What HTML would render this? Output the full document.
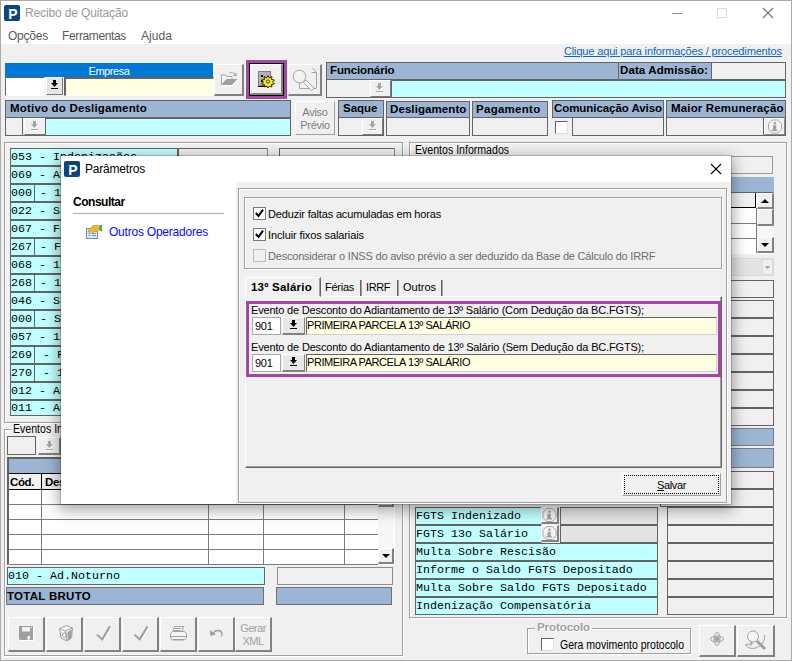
<!DOCTYPE html>
<html><head><meta charset="utf-8"><title>Recibo de Quitação</title>
<style>
*{box-sizing:border-box;margin:0;padding:0}
html,body{width:792px;height:661px;overflow:hidden;background:#f0f0f0;font-family:"Liberation Sans",sans-serif;font-size:11px;color:#000}
.a{position:absolute}
.t{position:absolute;white-space:nowrap;line-height:1}
.hd{position:absolute;background:#9cb5d5;border:1px solid #646464;font-weight:bold;white-space:nowrap;overflow:hidden;line-height:13px;padding:1px 0 0 3px}
.fl{position:absolute;border:1px solid #646464;background:#f0f0f0}
.sk{position:absolute;border:1px solid;border-color:#646464 #fff #fff #646464;background:#f0f0f0}
.rs{position:absolute;border:1px solid;border-color:#fff #7a7a7a #7a7a7a #fff;background:#f0f0f0}
.rs2{position:absolute;border:solid;border-width:1px 2px 2px 1px;border-color:#fff #828282 #828282 #fff;background:#f0f0f0}
.gb{position:absolute;border:1px solid #a0a0a0;box-shadow:1px 1px 0 #fff, inset 1px 1px 0 #fff}
.cy{background:#c0ffff}
.ye{background:#ffffe1}
.wh{background:#fff}
.bl{background:#9cb5d5}
.mono{font-family:"Liberation Mono",monospace;font-size:11.67px;white-space:nowrap;overflow:hidden;line-height:17px;padding-left:0px}
svg{position:absolute;left:0;top:0;overflow:visible}
</style></head><body>
<div class="a wh" style="left:0px;top:0px;width:792px;height:44px;"></div>
<div class="t" style="left:25px;top:7px;font-size:12px;letter-spacing:-0.13px;color:#999">Recibo de Quitação</div>
<div class="t" style="left:8px;top:30px;font-size:12px;letter-spacing:-0.23px;color:#5a5a5a">Opções</div>
<div class="t" style="left:62px;top:30px;font-size:12px;letter-spacing:-0.37px;color:#5a5a5a">Ferramentas</div>
<div class="t" style="left:141px;top:30px;font-size:12px;letter-spacing:0.06px;color:#5a5a5a">Ajuda</div>
<div class="t" style="left:564px;top:46px;font-size:11px;letter-spacing:-0.15px;color:#0a66cc;text-decoration:underline">Clique aqui para informações / procedimentos</div>
<div class="a" style="left:5px;top:63px;width:208px;height:14px;background:#0078d7;color:#fff;text-align:center;line-height:16px;font-size:11px;letter-spacing:-0.43px;">Empresa</div>
<div class="sk wh" style="left:5px;top:77px;width:40px;height:19px;"></div>
<div class="rs" style="left:46px;top:77px;width:17px;height:18px;background:#e4e4e4"></div>
<div class="sk ye" style="left:64px;top:77px;width:150px;height:19px;border-width:2px 1px 1px 2px"></div>
<div class="rs2" style="left:214px;top:64px;width:30px;height:32px;"></div>
<div class="a" style="left:246px;top:60px;width:41px;height:39px;border:3px solid #a446a4"></div>
<div class="a" style="left:249px;top:63px;width:35px;height:33px;border:1px solid #000"></div>
<div class="rs2" style="left:250px;top:64px;width:33px;height:31px;"></div>
<div class="rs2" style="left:288px;top:64px;width:34px;height:32px;"></div>
<div class="hd" style="left:326px;top:62px;width:293px;height:18px;font-size:11.5px;letter-spacing:-0.12px;">Funcionário</div>
<div class="hd" style="left:618px;top:62px;width:94px;height:18px;padding-left:1px;font-size:11.5px;letter-spacing:0.11px;">Data Admissão:</div>
<div class="fl" style="left:711px;top:62px;width:75px;height:18px;"></div>
<div class="fl" style="left:326px;top:79px;width:460px;height:19px;"></div>
<div class="rs" style="left:370px;top:80px;width:21px;height:17px;"></div>
<div class="fl cy" style="left:391px;top:79px;width:395px;height:19px;border-top-width:2px"></div>
<div class="hd" style="left:5px;top:100px;width:286px;height:18px;padding-left:4px;font-size:11.5px;letter-spacing:0.19px;">Motivo do Desligamento</div>
<div class="fl" style="left:5px;top:117px;width:286px;height:19px;"></div>
<div class="fl" style="left:5px;top:117px;width:18px;height:19px;"></div>
<div class="rs" style="left:24px;top:118px;width:22px;height:17px;"></div>
<div class="fl cy" style="left:45px;top:117px;width:246px;height:19px;border-top-width:2px"></div>
<div class="rs" style="left:295px;top:101px;width:40px;height:34px;color:#7c7c7c;text-align:center;font-size:11px;letter-spacing:-0.25px;line-height:13px;padding-top:4px;border-color:#fff #a0a0a0 #a0a0a0 #fff">Aviso<br>Prévio</div>
<div class="hd" style="left:338px;top:100px;width:46px;height:18px;padding-left:4px;font-size:11.5px;letter-spacing:-0.00px;">Saque</div>
<div class="fl" style="left:338px;top:117px;width:46px;height:19px;"></div>
<div class="rs" style="left:362px;top:118px;width:21px;height:17px;"></div>
<div class="hd" style="left:386px;top:101px;width:84px;height:17px;font-size:11.5px;letter-spacing:0.09px;">Desligamento</div>
<div class="fl" style="left:386px;top:117px;width:84px;height:19px;"></div>
<div class="hd" style="left:472px;top:101px;width:76px;height:17px;font-size:11.5px;letter-spacing:0.28px;">Pagamento</div>
<div class="fl" style="left:472px;top:117px;width:76px;height:19px;"></div>
<div class="hd" style="left:552px;top:100px;width:112px;height:18px;padding-left:1px;font-size:11.5px;letter-spacing:-0.06px;">Comunicação Aviso</div>
<div class="sk wh" style="left:555px;top:121px;width:13px;height:13px;border-color:#646464 #e0e0e0 #e0e0e0 #646464"></div>
<div class="fl" style="left:572px;top:117px;width:92px;height:19px;"></div>
<div class="hd" style="left:666px;top:100px;width:120px;height:18px;padding-left:4px;font-size:11.5px;letter-spacing:0.16px;">Maior Remuneração</div>
<div class="fl" style="left:666px;top:117px;width:120px;height:19px;"></div>
<div class="rs" style="left:764px;top:118px;width:21px;height:17px;border-color:#fff #8a8a8a #8a8a8a #fff"></div>
<div class="a" style="left:763px;top:118px;width:1px;height:17px;background:#646464"></div>
<div class="gb" style="left:4px;top:142px;width:399px;height:281px;"></div>
<div class="fl cy mono" style="left:10px;top:148px;width:168px;height:18px;">053 - Indenizações</div>
<div class="fl" style="left:178px;top:148px;width:90px;height:17px;border-color:#646464 #8c8c8c #c8c8c8 #646464"></div>
<div class="fl" style="left:279px;top:148px;width:116px;height:17px;border-color:#646464 #8c8c8c #c8c8c8 #646464"></div>
<div class="fl cy mono" style="left:10px;top:166px;width:168px;height:18px;">069 - Aviso Prévio</div>
<div class="fl" style="left:178px;top:166px;width:90px;height:17px;border-color:#646464 #8c8c8c #c8c8c8 #646464"></div>
<div class="fl" style="left:279px;top:166px;width:116px;height:17px;border-color:#646464 #8c8c8c #c8c8c8 #646464"></div>
<div class="fl cy mono" style="left:10px;top:184px;width:25px;height:18px;">000</div>
<div class="fl cy mono" style="left:34px;top:184px;width:144px;height:18px;padding-left:5px">- 13o</div>
<div class="fl" style="left:178px;top:184px;width:90px;height:17px;border-color:#646464 #8c8c8c #c8c8c8 #646464"></div>
<div class="fl" style="left:279px;top:184px;width:116px;height:17px;border-color:#646464 #8c8c8c #c8c8c8 #646464"></div>
<div class="fl cy mono" style="left:10px;top:202px;width:168px;height:18px;">022 - Sal.Fam</div>
<div class="fl" style="left:178px;top:202px;width:90px;height:17px;border-color:#646464 #8c8c8c #c8c8c8 #646464"></div>
<div class="fl" style="left:279px;top:202px;width:116px;height:17px;border-color:#646464 #8c8c8c #c8c8c8 #646464"></div>
<div class="fl cy mono" style="left:10px;top:220px;width:168px;height:18px;">067 - Férias</div>
<div class="fl" style="left:178px;top:220px;width:90px;height:17px;border-color:#646464 #8c8c8c #c8c8c8 #646464"></div>
<div class="fl" style="left:279px;top:220px;width:116px;height:17px;border-color:#646464 #8c8c8c #c8c8c8 #646464"></div>
<div class="fl cy mono" style="left:10px;top:238px;width:25px;height:18px;">267</div>
<div class="fl cy mono" style="left:34px;top:238px;width:144px;height:18px;padding-left:5px">- Fér</div>
<div class="fl" style="left:178px;top:238px;width:90px;height:17px;border-color:#646464 #8c8c8c #c8c8c8 #646464"></div>
<div class="fl" style="left:279px;top:238px;width:116px;height:17px;border-color:#646464 #8c8c8c #c8c8c8 #646464"></div>
<div class="fl cy mono" style="left:10px;top:256px;width:168px;height:18px;">068 - 1/3</div>
<div class="fl" style="left:178px;top:256px;width:90px;height:17px;border-color:#646464 #8c8c8c #c8c8c8 #646464"></div>
<div class="fl" style="left:279px;top:256px;width:116px;height:17px;border-color:#646464 #8c8c8c #c8c8c8 #646464"></div>
<div class="fl cy mono" style="left:10px;top:274px;width:25px;height:18px;">268</div>
<div class="fl cy mono" style="left:34px;top:274px;width:144px;height:18px;padding-left:5px">- 1/3</div>
<div class="fl" style="left:178px;top:274px;width:90px;height:17px;border-color:#646464 #8c8c8c #c8c8c8 #646464"></div>
<div class="fl" style="left:279px;top:274px;width:116px;height:17px;border-color:#646464 #8c8c8c #c8c8c8 #646464"></div>
<div class="fl cy mono" style="left:10px;top:292px;width:168px;height:18px;">046 - Sal</div>
<div class="fl" style="left:178px;top:292px;width:90px;height:17px;border-color:#646464 #8c8c8c #c8c8c8 #646464"></div>
<div class="fl" style="left:279px;top:292px;width:116px;height:17px;border-color:#646464 #8c8c8c #c8c8c8 #646464"></div>
<div class="fl cy mono" style="left:10px;top:310px;width:25px;height:18px;">000</div>
<div class="fl cy mono" style="left:34px;top:310px;width:144px;height:18px;padding-left:5px">- Sal</div>
<div class="fl" style="left:178px;top:310px;width:90px;height:17px;border-color:#646464 #8c8c8c #c8c8c8 #646464"></div>
<div class="fl" style="left:279px;top:310px;width:116px;height:17px;border-color:#646464 #8c8c8c #c8c8c8 #646464"></div>
<div class="fl cy mono" style="left:10px;top:328px;width:168px;height:18px;">057 - 13o</div>
<div class="fl" style="left:178px;top:328px;width:90px;height:17px;border-color:#646464 #8c8c8c #c8c8c8 #646464"></div>
<div class="fl" style="left:279px;top:328px;width:116px;height:17px;border-color:#646464 #8c8c8c #c8c8c8 #646464"></div>
<div class="fl cy mono" style="left:10px;top:346px;width:25px;height:18px;">269</div>
<div class="fl cy mono" style="left:34px;top:346px;width:144px;height:18px;padding-left:8px">- Fér</div>
<div class="fl" style="left:178px;top:346px;width:90px;height:17px;border-color:#646464 #8c8c8c #c8c8c8 #646464"></div>
<div class="fl" style="left:279px;top:346px;width:116px;height:17px;border-color:#646464 #8c8c8c #c8c8c8 #646464"></div>
<div class="fl cy mono" style="left:10px;top:364px;width:25px;height:18px;">270</div>
<div class="fl cy mono" style="left:34px;top:364px;width:144px;height:18px;padding-left:8px">- 1/3</div>
<div class="fl" style="left:178px;top:364px;width:90px;height:17px;border-color:#646464 #8c8c8c #c8c8c8 #646464"></div>
<div class="fl" style="left:279px;top:364px;width:116px;height:17px;border-color:#646464 #8c8c8c #c8c8c8 #646464"></div>
<div class="fl cy mono" style="left:10px;top:382px;width:168px;height:18px;">012 - Adic</div>
<div class="fl" style="left:178px;top:382px;width:90px;height:17px;border-color:#646464 #8c8c8c #c8c8c8 #646464"></div>
<div class="fl" style="left:279px;top:382px;width:116px;height:17px;border-color:#646464 #8c8c8c #c8c8c8 #646464"></div>
<div class="fl cy mono" style="left:10px;top:400px;width:168px;height:16px;line-height:15px">011 - Adic</div>
<div class="fl" style="left:178px;top:400px;width:90px;height:17px;border-color:#646464 #8c8c8c #c8c8c8 #646464"></div>
<div class="fl" style="left:279px;top:400px;width:116px;height:17px;border-color:#646464 #8c8c8c #c8c8c8 #646464"></div>
<div class="gb" style="left:4px;top:429px;width:399px;height:227px;"></div>
<div class="a" style="left:11px;top:429px;width:100px;height:2px;background:#f0f0f0"></div>
<div class="t" style="left:13px;top:423px;font-size:12.5px;transform-origin:0 0;transform:scaleX(0.846);">Eventos Informados</div>
<div class="fl" style="left:7px;top:436px;width:29px;height:19px;"></div>
<div class="rs2" style="left:38px;top:437px;width:23px;height:18px;"></div>
<div class="sk wh" style="left:7px;top:457px;width:388px;height:108px;border-width:2px 1px 1px 2px"></div>
<div class="a bl" style="left:9px;top:459px;width:369px;height:14px;"></div>
<div class="a" style="left:9px;top:473px;width:369px;height:1px;background:#000"></div>
<div class="a" style="left:9px;top:474px;width:32px;height:15px;background:#f0f0f0;font-weight:bold;padding-left:1px;line-height:16px;font-size:11.5px;letter-spacing:-0.39px;">Cód.</div>
<div class="a" style="left:42px;top:474px;width:336px;height:15px;background:#f0f0f0;font-weight:bold;padding-left:3px;line-height:16px;font-size:11.5px;letter-spacing:-0.33px;">Descrição</div>
<div class="a" style="left:9px;top:489px;width:369px;height:1px;background:#000"></div>
<div class="a" style="left:9px;top:504px;width:369px;height:1px;background:#7c7c7c"></div>
<div class="a" style="left:9px;top:519px;width:369px;height:1px;background:#7c7c7c"></div>
<div class="a" style="left:9px;top:534px;width:369px;height:1px;background:#7c7c7c"></div>
<div class="a" style="left:9px;top:549px;width:369px;height:1px;background:#7c7c7c"></div>
<div class="a" style="left:9px;top:564px;width:369px;height:1px;background:#7c7c7c"></div>
<div class="a" style="left:41px;top:474px;width:1px;height:90px;background:#000"></div>
<div class="a" style="left:208px;top:474px;width:1px;height:90px;background:#7c7c7c"></div>
<div class="a" style="left:263px;top:474px;width:1px;height:90px;background:#7c7c7c"></div>
<div class="a" style="left:344px;top:474px;width:1px;height:90px;background:#7c7c7c"></div>
<div class="a" style="left:41px;top:474px;width:1px;height:16px;background:#000"></div>
<div class="a" style="left:41px;top:490px;width:1px;height:74px;background:#7c7c7c"></div>
<div class="a" style="left:378px;top:459px;width:16px;height:105px;background:#f7f7f7"></div>
<div class="rs2" style="left:378px;top:491px;width:16px;height:16px;"></div>
<div class="rs2" style="left:378px;top:548px;width:16px;height:16px;"></div>
<div class="fl cy mono" style="left:7px;top:567px;width:258px;height:18px;border-color:#646464">010 - Ad.Noturno</div>
<div class="fl" style="left:277px;top:567px;width:116px;height:18px;border-color:#8c8c8c"></div>
<div class="fl bl" style="left:6px;top:587px;width:258px;height:18px;font-weight:bold;line-height:16px;padding-left:0px;border-color:#707070;font-size:11.5px;letter-spacing:0.28px;">TOTAL BRUTO</div>
<div class="fl bl" style="left:276px;top:587px;width:116px;height:18px;border-color:#707070"></div>
<div class="rs2" style="left:8px;top:617px;width:37px;height:35px;color:#a0a0a0;text-align:center;font-size:11px;letter-spacing:-0.5px;line-height:13px;padding-top:4px"></div>
<div class="rs2" style="left:46px;top:617px;width:37px;height:35px;color:#a0a0a0;text-align:center;font-size:11px;letter-spacing:-0.5px;line-height:13px;padding-top:4px"></div>
<div class="rs2" style="left:84px;top:617px;width:37px;height:35px;color:#a0a0a0;text-align:center;font-size:11px;letter-spacing:-0.5px;line-height:13px;padding-top:4px"></div>
<div class="rs2" style="left:122px;top:617px;width:37px;height:35px;color:#a0a0a0;text-align:center;font-size:11px;letter-spacing:-0.5px;line-height:13px;padding-top:4px"></div>
<div class="rs2" style="left:160px;top:617px;width:37px;height:35px;color:#a0a0a0;text-align:center;font-size:11px;letter-spacing:-0.5px;line-height:13px;padding-top:4px"></div>
<div class="rs2" style="left:198px;top:617px;width:37px;height:35px;color:#a0a0a0;text-align:center;font-size:11px;letter-spacing:-0.5px;line-height:13px;padding-top:4px"></div>
<div class="rs2" style="left:235px;top:617px;width:37px;height:35px;color:#a0a0a0;text-align:center;font-size:11px;letter-spacing:-0.5px;line-height:13px;padding-top:4px">Gerar<br>XML</div>
<div class="gb" style="left:409px;top:142px;width:378px;height:476px;"></div>
<div class="t" style="left:415px;top:144px;font-size:12.5px;transform-origin:0 0;transform:scaleX(0.846);">Eventos Informados</div>
<div class="fl" style="left:660px;top:156px;width:113px;height:18px;border-color:#9a9a9a"></div>
<div class="a bl" style="left:660px;top:177px;width:114px;height:15px;"></div>
<div class="sk wh" style="left:660px;top:192px;width:114px;height:62px;border-width:1px"></div>
<div class="a" style="left:661px;top:193px;width:95px;height:15px;background:#f0f0f0;border:solid #000;border-width:0 1px 1px 0"></div>
<div class="a" style="left:661px;top:223px;width:95px;height:1px;background:#7c7c7c"></div>
<div class="a" style="left:661px;top:238px;width:95px;height:1px;background:#7c7c7c"></div>
<div class="a" style="left:756px;top:208px;width:1px;height:45px;background:#7c7c7c"></div>
<div class="a" style="left:757px;top:193px;width:17px;height:60px;background:#f7f7f7"></div>
<div class="rs2" style="left:757px;top:193px;width:17px;height:16px;"></div>
<div class="rs2" style="left:757px;top:209px;width:17px;height:17px;"></div>
<div class="rs2" style="left:757px;top:237px;width:17px;height:16px;"></div>
<div class="a" style="left:660px;top:258px;width:114px;height:18px;background:#e3e3e3;border:1px solid #d8d8d8"></div>
<div class="a" style="left:762px;top:259px;width:11px;height:16px;background:#f0f0f0;border:1px solid #dcdcdc"></div>
<div class="fl" style="left:660px;top:280px;width:114px;height:18px;"></div>
<div class="fl" style="left:660px;top:300px;width:114px;height:18px;"></div>
<div class="fl" style="left:660px;top:318px;width:114px;height:18px;"></div>
<div class="fl" style="left:660px;top:336px;width:114px;height:18px;"></div>
<div class="fl" style="left:660px;top:354px;width:114px;height:18px;"></div>
<div class="fl" style="left:660px;top:372px;width:114px;height:18px;"></div>
<div class="fl" style="left:660px;top:390px;width:114px;height:18px;"></div>
<div class="fl" style="left:660px;top:408px;width:114px;height:18px;"></div>
<div class="fl bl" style="left:660px;top:428px;width:114px;height:18px;border-color:#7c7c7c"></div>
<div class="fl bl" style="left:660px;top:448px;width:114px;height:20px;border-color:#7c7c7c"></div>
<div class="fl" style="left:660px;top:471px;width:114px;height:18px;"></div>
<div class="fl" style="left:660px;top:489px;width:114px;height:18px;"></div>
<div class="fl" style="left:667px;top:507px;width:107px;height:18px;"></div>
<div class="fl" style="left:667px;top:525px;width:107px;height:18px;"></div>
<div class="fl" style="left:667px;top:543px;width:107px;height:18px;"></div>
<div class="fl" style="left:667px;top:561px;width:107px;height:18px;"></div>
<div class="fl" style="left:667px;top:579px;width:107px;height:18px;"></div>
<div class="fl" style="left:667px;top:597px;width:107px;height:18px;"></div>
<div class="fl cy mono" style="left:415px;top:507px;width:127px;height:18px;border-color:#646464 #c0ffff #646464 #646464">FGTS Indenizado</div>
<div class="rs2" style="left:541px;top:507px;width:18px;height:17px;"></div>
<div class="fl" style="left:560px;top:507px;width:98px;height:18px;background:#e4e4e4"></div>
<div class="fl cy mono" style="left:415px;top:525px;width:127px;height:18px;border-color:#646464 #c0ffff #646464 #646464">FGTS 13o Salário</div>
<div class="rs2" style="left:541px;top:525px;width:18px;height:17px;"></div>
<div class="fl" style="left:560px;top:525px;width:98px;height:18px;background:#e4e4e4"></div>
<div class="fl cy mono" style="left:415px;top:543px;width:243px;height:18px;">Multa Sobre Rescisão</div>
<div class="fl cy mono" style="left:415px;top:561px;width:243px;height:18px;">Informe o Saldo FGTS Depositado</div>
<div class="fl cy mono" style="left:415px;top:579px;width:243px;height:18px;">Multa Sobre Saldo FGTS Depositado</div>
<div class="fl cy mono" style="left:415px;top:597px;width:243px;height:18px;">Indenização Compensatória</div>
<div class="gb" style="left:527px;top:628px;width:164px;height:26px;"></div>
<div class="t" style="left:535px;top:622px;font-size:11.5px;letter-spacing:-0.07px;font-weight:bold;color:#a0a0a0;text-shadow:1px 1px 0 #fff;background:#f0f0f0;padding:0 2px">Protocolo</div>
<div class="sk wh" style="left:541px;top:638px;width:13px;height:13px;border-color:#646464 #e0e0e0 #e0e0e0 #646464"></div>
<div class="t" style="left:560px;top:639px;font-size:12.5px;transform-origin:0 0;transform:scaleX(0.842);">Gera movimento protocolo</div>
<div class="rs2" style="left:699px;top:625px;width:37px;height:32px;"></div>
<div class="rs2" style="left:737px;top:625px;width:38px;height:32px;"></div>
<svg width="792" height="661" viewBox="0 0 792 661"><rect x="4" y="5" width="16" height="16" rx="2" fill="#0b4580"/><text x="8.2" y="18.6" font-family="Liberation Sans, sans-serif" font-weight="bold" font-size="14" fill="#fff">P</text><path d="M7.6 7.6l2.6 3.6l-.9 .2z" fill="#29a8e0"/><path d="M672 13.5h10" stroke="#8a8a8a" stroke-width="1" fill="none"/><rect x="717.5" y="8.5" width="9" height="9" stroke="#dcdcdc" fill="none"/><path d="M763 8l10 10M773 8l-10 10" stroke="#777" stroke-width="1.1" fill="none"/><path fill="#000" d="M53 80h3v3h2l-3.5 4l-3.5 -4h2z"/><rect fill="#000" x="51" y="88" width="7" height="1"/><g transform="translate(1,1)"><path d="M221.500 84.500v-9.500h4l1 1.500h5.500v3" fill="none" stroke="#fff"/><path d="M221 85h11l5.500-6h-11z" fill="#fff"/></g><path d="M221.500 84.500v-9.500h4l1 1.500h5.500v3" fill="none" stroke="#a0a0a0"/><path d="M221 85h11l5.500-6h-11z" fill="#a0a0a0"/><path d="M229 73.500c2-2 5-1.500 6.500 1" fill="none" stroke="#a0a0a0"/><path d="M236.500 72.500v3.500h-3.500z" fill="#a0a0a0"/><rect x="258.500" y="71.500" width="12" height="14" fill="#b4b4b4" stroke="#808080"/><path d="M258 86.500h11" stroke="#000"/><path d="M261 75h2v2h-2zM261 80h2v2h-2z" fill="#000"/><path d="M268 75.500l1.500 2.500l2.500-1.500l-.5 3l3 .5l-2 2l2 2l-3 .5l.5 2.500l-2.500-1l-1.500 2l-1.500-2l-2.500 1l.5-2.500l-3-.5l2-2l-2-2l3-.5l-.5-3l2.500 1.500z" fill="#f4ee1a" stroke="#000" stroke-width=".8"/><circle cx="268" cy="81.500" r="1.600" fill="#e0e0e0" stroke="#000" stroke-width=".7"/><g fill="none" stroke="#a4a4a4" stroke-width="1"><path d="M299.500 83v5.500h17v-16M311.500 72.500h5M312.500 68l4 4.500"/><circle cx="299.500" cy="76.500" r="6.300" fill="#f3f3f3"/><path d="M303.500 82.500l8 8l2.500-2.500l-8-8z" fill="#fafafa"/></g><path fill="#fff" d="M379 84h3v3h2l-3.5 4l-3.5 -4h2z"/><rect fill="#fff" x="377" y="92" width="7" height="1"/><path fill="#a6a6a6" d="M378 83h3v3h2l-3.5 4l-3.5 -4h2z"/><rect fill="#a6a6a6" x="376" y="91" width="7" height="1"/><path fill="#fff" d="M34 122h3v3h2l-3.5 4l-3.5 -4h2z"/><rect fill="#fff" x="32" y="130" width="7" height="1"/><path fill="#a6a6a6" d="M33 121h3v3h2l-3.5 4l-3.5 -4h2z"/><rect fill="#a6a6a6" x="31" y="129" width="7" height="1"/><path fill="#fff" d="M372 122h3v3h2l-3.5 4l-3.5 -4h2z"/><rect fill="#fff" x="370" y="130" width="7" height="1"/><path fill="#a6a6a6" d="M371 121h3v3h2l-3.5 4l-3.5 -4h2z"/><rect fill="#a6a6a6" x="369" y="129" width="7" height="1"/><polygon points="772.3,120.0 777.7,120.0 781.5,123.8 781.5,129.2 777.7,133.0 772.3,133.0 768.5,129.2 768.5,123.8" fill="#f4f4f4" stroke="#a8a8a8" stroke-width="1"/><circle cx="775" cy="123.2" r="1.3" fill="#a0a0a0"/><path fill="#a0a0a0" d="M773 125.3h3.3v4.4h1.2v1.3h-5.7v-1.3h1.2z"/><path fill="#fff" d="M49 442h3v3h2l-3.5 4l-3.5 -4h2z"/><rect fill="#fff" x="47" y="450" width="7" height="1"/><path fill="#a6a6a6" d="M48 441h3v3h2l-3.5 4l-3.5 -4h2z"/><rect fill="#a6a6a6" x="46" y="449" width="7" height="1"/><path d="M382 554h8l-4 4z" fill="#000"/><g transform="translate(1,1)"><path d="M19 626h14v14h-13l-1-1z" fill="#fff"/></g><path d="M19 626h14v14h-13l-1-1z" fill="#a0a0a0"/><rect x="22" y="627" width="8" height="4.500" fill="#f0f0f0"/><rect x="23" y="635" width="7" height="5" fill="#a0a0a0"/><rect x="27.5" y="636" width="2.5" height="3.5" fill="#fff"/><rect x="31" y="627" width="1" height="1" fill="#fff"/><g fill="none" stroke="#a0a0a0" stroke-width="1"><path d="M59.5 628.5l7-3l6 2.5l-1 10l-4.5 3l-6-3z" fill="#f6f6f6"/><path d="M59.5 628.5l6 2.5l7-3M65.5 631l1 9.5"/><circle cx="64.5" cy="635" r="2.2"/></g><path d="M67.5 632l4.5-2.5l-.8 8.5l-3.7 2.5z" fill="#a0a0a0"/><path d="M98 635.7l5.3 4.6l7.7-12.9" fill="none" stroke="#fff" stroke-width="2"/><path d="M97 634.7l5.3 4.6l7.7-12.9" fill="none" stroke="#a0a0a0" stroke-width="2.100"/><path d="M135.5 635.7l5.3 4.6l7.7-12.9" fill="none" stroke="#fff" stroke-width="2"/><path d="M134.5 634.7l5.3 4.6l7.7-12.9" fill="none" stroke="#a0a0a0" stroke-width="2.100"/><g fill="#f4f4f4" stroke="#a0a0a0" stroke-width="1"><path d="M174.5 626.5h9l-2 6h-9z"/><path d="M170.5 633.5l2-2h12l2 2v4l-2 2.500h-12l-2-2.500z"/><path d="M170.500 636.500h16M173 639.500h11" fill="none"/><path d="M175 628.500h6M174.300 630.500h6" fill="none"/></g><path d="M213 633.500c2-4 8-4 9 0c.3 1.500-.3 2.500-1 3" fill="none" stroke="#a0a0a0" stroke-width="1.300"/><path d="M210 630l.300 6l5.500-1.500z" fill="#a0a0a0"/><path d="M761 203h8l-4-4z" fill="#000"/><path d="M761 243h8l-4 4z" fill="#000"/><path d="M764.500 266h6l-3 3.500z" fill="#a8a8a8"/><polygon points="546.8,508.5 552.2,508.5 556.0,512.3 556.0,517.7 552.2,521.5 546.8,521.5 543.0,517.7 543.0,512.3" fill="#f4f4f4" stroke="#a8a8a8" stroke-width="1"/><circle cx="549.5" cy="511.7" r="1.3" fill="#a0a0a0"/><path fill="#a0a0a0" d="M547.5 513.8h3.3v4.4h1.2v1.3h-5.7v-1.3h1.2z"/><polygon points="546.8,526.5 552.2,526.5 556.0,530.3 556.0,535.7 552.2,539.5 546.8,539.5 543.0,535.7 543.0,530.3" fill="#f4f4f4" stroke="#a8a8a8" stroke-width="1"/><circle cx="549.5" cy="529.7" r="1.3" fill="#a0a0a0"/><path fill="#a0a0a0" d="M547.5 531.8h3.3v4.4h1.2v1.3h-5.7v-1.3h1.2z"/><g fill="none" stroke="#a0a0a0" stroke-width="1"><ellipse cx="717" cy="639" rx="6.500" ry="3"/><ellipse cx="717" cy="639" rx="3" ry="6.500"/><circle cx="717" cy="639" r="2" fill="#a0a0a0"/></g><g fill="none" stroke="#a0a0a0" stroke-width="1"><circle cx="753" cy="636.500" r="5.500" fill="#f4f4f4"/><path d="M764.500 635c1 6-3 11-9 13c-4 1-8 0-10-3"/><path d="M745 645l7.500-1.500M752.500 643.500l-3-2.500M752.500 643.500l-2.500 3"/><path d="M757 641l8 8" stroke-width="3"/></g></svg>
<div class="a wh" style="left:61px;top:156px;width:670px;height:348px;box-shadow:0 4px 14px 2px rgba(0,0,0,.36), 0 0 0 1px rgba(0,0,0,.18)"></div>
<div class="t" style="left:85px;top:163px;font-size:12px;letter-spacing:-0.20px;">Parâmetros</div>
<div class="t" style="left:73px;top:196px;font-size:12px;letter-spacing:-0.48px;font-weight:bold;">Consultar</div>
<div class="a" style="left:73px;top:213px;width:151px;height:1px;background:#a8a8a8"></div>
<div class="t" style="left:109px;top:226px;font-size:12px;letter-spacing:-0.22px;color:#0a0aff">Outros Operadores</div>
<div class="a" style="left:236px;top:182px;width:495px;height:322px;background:#f0f0f0"></div>
<div class="gb" style="left:238px;top:188px;width:489px;height:315px;"></div>
<div class="gb" style="left:244px;top:197px;width:478px;height:72px;"></div>
<div class="a" style="left:253px;top:207px;width:13px;height:13px;background:#fff;border:1px solid #7a7a7a"></div>
<div class="t" style="left:268px;top:209px;font-size:11px;letter-spacing:-0.16px;">Deduzir faltas acumuladas em horas</div>
<div class="a" style="left:253px;top:228px;width:13px;height:13px;background:#fff;border:1px solid #7a7a7a"></div>
<div class="t" style="left:268px;top:230px;font-size:11px;letter-spacing:-0.11px;">Incluir fixos salariais</div>
<div class="a" style="left:253px;top:249px;width:13px;height:13px;background:#f0f0f0;border:1px solid #bcbcbc"></div>
<div class="t" style="left:268px;top:251px;font-size:11px;letter-spacing:-0.21px;color:#6d6d6d">Desconsiderar o INSS do aviso prévio a ser deduzido da Base de Cálculo do IRRF</div>
<div class="a" style="left:245px;top:296px;width:477px;height:172px;border:1px solid;border-color:#fff #646464 #646464 #fff;box-shadow:inset -1px -1px 0 #a0a0a0"></div>
<div class="a" style="left:245px;top:277px;width:76px;height:20px;border:1px solid;border-color:#fff #646464 #f0f0f0 #fff;box-shadow:inset -1px 0 0 #a0a0a0;background:#f0f0f0;font-weight:bold;padding:3px 0 0 5px;line-height:13px;white-space:nowrap;font-size:11.5px;letter-spacing:0.22px;">13º Salário</div>
<div class="t" style="left:325px;top:282px;font-size:11px;letter-spacing:-0.26px;">Férias</div>
<div class="t" style="left:366px;top:282px;font-size:11px;letter-spacing:-0.42px;">IRRF</div>
<div class="t" style="left:403px;top:282px;font-size:11px;letter-spacing:-0.00px;">Outros</div>
<div class="a" style="left:360px;top:280px;width:2px;height:16px;background:#646464;border-right:1px solid #a0a0a0"></div>
<div class="a" style="left:397px;top:280px;width:2px;height:16px;background:#646464;border-right:1px solid #a0a0a0"></div>
<div class="a" style="left:441px;top:280px;width:2px;height:16px;background:#646464;border-right:1px solid #a0a0a0"></div>
<div class="a" style="left:246px;top:301px;width:475px;height:76px;border:3px solid #a446a4"></div>
<div class="t" style="left:251px;top:305px;font-size:11px;letter-spacing:-0.18px;">Evento de Desconto do Adiantamento de 13º Salário (Com Dedução da BC.FGTS);</div>
<div class="a wh" style="left:252px;top:317px;width:29px;height:18px;line-height:17px;padding-left:2px;border:1px solid #a6a6a6;font-size:11px;letter-spacing:-0.28px;">901</div>
<div class="rs2" style="left:282px;top:317px;width:23px;height:18px;background:#e8e8e8;border-right-width:1px"></div>
<div class="sk ye" style="left:306px;top:317px;width:411px;height:18px;line-height:15px;padding-left:0px;white-space:nowrap;border-width:1px;border-color:#646464 #d0d0d0 #d0d0d0 #646464;font-size:11px;letter-spacing:-0.45px;">PRIMEIRA PARCELA 13º SALÁRIO</div>
<div class="t" style="left:251px;top:342px;font-size:11px;letter-spacing:-0.17px;">Evento de Desconto do Adiantamento de 13º Salário (Sem Dedução da BC.FGTS);</div>
<div class="a wh" style="left:252px;top:354px;width:29px;height:18px;line-height:17px;padding-left:2px;border:1px solid #a6a6a6;font-size:11px;letter-spacing:-0.28px;">901</div>
<div class="rs2" style="left:282px;top:354px;width:23px;height:18px;background:#e8e8e8;border-right-width:1px"></div>
<div class="sk ye" style="left:306px;top:354px;width:411px;height:18px;line-height:15px;padding-left:0px;white-space:nowrap;border-width:1px;border-color:#646464 #d0d0d0 #d0d0d0 #646464;font-size:11px;letter-spacing:-0.45px;">PRIMEIRA PARCELA 13º SALÁRIO</div>
<div class="rs" style="left:622px;top:473px;width:99px;height:23px;text-align:center;line-height:22px;border-color:#fff #a0a0a0 #a0a0a0 #fff;font-size:11px;letter-spacing:-0.36px;"><u>S</u>alvar</div>
<div class="a" style="left:624px;top:475px;width:95px;height:19px;border:1px dotted #000"></div>
<svg width="792" height="661" viewBox="0 0 792 661"><rect x="64" y="161" width="16" height="16" rx="2" fill="#0b4580"/><text x="68.2" y="174.600" font-family="Liberation Sans, sans-serif" font-weight="bold" font-size="14" fill="#fff">P</text><path d="M67.600 163.600l2.600 3.600l-.9 .2z" fill="#29a8e0"/><path d="M711 164l10 10M721 164l-10 10" stroke="#000" stroke-width="1.100" fill="none"/><rect x="86.500" y="228.500" width="11" height="10" fill="#dfe8f6" stroke="#6f88b4"/><path d="M88.500 233.500h2M92 233.500h4M88.500 235.500h2M92 235.500h4" stroke="#7a90b8" fill="none"/><path d="M88 231l5-5.500h5.500l1 1.500v3l-2 1.500h-3.500l-1.500 2l-2-2l-1.500 1z" fill="#e9b92f" stroke="#b8901c" stroke-width=".6"/><path d="M99.500 225h2.500v6.800l-2.500-1.500z" fill="#4aa84a"/><path d="M255.800 213l2.700 3l4.500-6.300" fill="none" stroke="#000" stroke-width="2"/><path d="M255.800 234l2.700 3l4.500-6.300" fill="none" stroke="#000" stroke-width="2"/><path fill="#000" d="M292 320h3v3h2l-3.5 4l-3.5 -4h2z"/><rect fill="#000" x="290" y="328" width="7" height="1"/><path fill="#000" d="M292 357h3v3h2l-3.5 4l-3.5 -4h2z"/><rect fill="#000" x="290" y="365" width="7" height="1"/></svg>
<div class="a" style="left:0;top:0;width:792px;height:661px;border:1px solid #ababab;pointer-events:none"></div>
</body></html>
